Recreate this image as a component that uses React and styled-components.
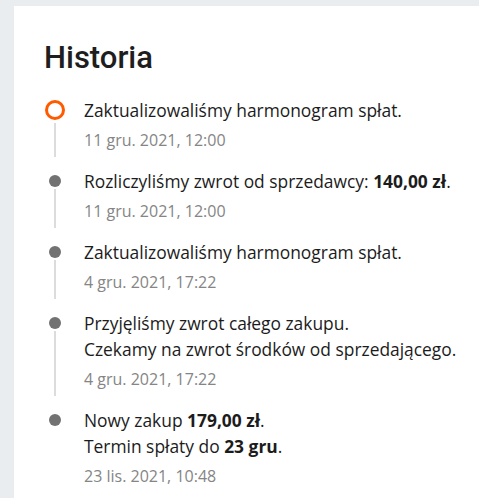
import React from "react";
import styled, { createGlobalStyle } from "styled-components";

const Global = createGlobalStyle`
  html, body { margin: 0; padding: 0; background: #ffffff; }
  body { font-family: "Open Sans", "Liberation Sans", sans-serif; }
  * { box-sizing: border-box; }
`;

const Page = styled.div`
  width: 479px;
  min-height: 498px;
  background: #e9edf0;
  padding: 6px 0 0 14px;
  display: flex;
`;

const Card = styled.section`
  flex: 1;
  min-width: 0;
  background: #ffffff;
  padding: 34px 0 0 30px;
`;

const Title = styled.h2`
  margin: 0 0 21px 0;
  font-family: Roboto, "Liberation Sans", sans-serif;
  font-weight: 500;
  font-size: 31px;
  line-height: 36px;
  color: #1e1e1e;
`;

const List = styled.ol`
  list-style: none;
  margin: 0;
  padding: 0;
`;

const Item = styled.li`
  display: grid;
  grid-template-columns: 22px 1fr;
  column-gap: 18px;
  padding-bottom: ${(p) => (p.$last ? 0 : 16)}px;
`;

const Rail = styled.div`
  display: flex;
  flex-direction: column;
  align-items: center;
  padding-top: ${(p) => (p.$active ? 3 : 7)}px;
`;

const Ring = styled.span`
  width: 20px;
  height: 20px;
  border-radius: 50%;
  border: 3px solid #ff5a00;
  flex: none;
`;

const Dot = styled.span`
  width: 12px;
  height: 12px;
  border-radius: 50%;
  background: #727272;
  flex: none;
`;

const Line = styled.span`
  flex: 1;
  width: 2px;
  background: #dcdcdc;
  margin-top: ${(p) => (p.$active ? 3 : 2)}px;
  margin-bottom: -5px;
`;

const Body = styled.div`
  min-width: 0;
`;

const Message = styled.p`
  margin: 0;
  font-size: 17.4px;
  line-height: 26px;
  color: #1c1c1c;
  white-space: nowrap;
  b { font-weight: 700; }
`;

const When = styled.time`
  display: block;
  margin-top: 5px;
  font-size: 16px;
  line-height: 24px;
  color: #858585;
`;

const events = [
  {
    active: true,
    lines: [<>Zaktualizowaliśmy harmonogram spłat.</>],
    date: "11 gru. 2021, 12:00",
  },
  {
    lines: [
      <>
        Rozliczyliśmy zwrot od sprzedawcy: <b>140,00 zł</b>.
      </>,
    ],
    date: "11 gru. 2021, 12:00",
  },
  {
    lines: [<>Zaktualizowaliśmy harmonogram spłat.</>],
    date: "4 gru. 2021, 17:22",
  },
  {
    lines: [
      <>Przyjęliśmy zwrot całego zakupu.</>,
      <>Czekamy na zwrot środków od sprzedającego.</>,
    ],
    date: "4 gru. 2021, 17:22",
  },
  {
    lines: [
      <>
        Nowy zakup <b>179,00 zł</b>.
      </>,
      <>
        Termin spłaty do <b>23 gru</b>.
      </>,
    ],
    date: "23 lis. 2021, 10:48",
  },
];

export default function App() {
  return (
    <>
      <Global />
      <Page>
        <Card>
          <Title>Historia</Title>
          <List>
            {events.map((e, i) => {
              const last = i === events.length - 1;
              return (
                <Item key={i} $last={last}>
                  <Rail $active={e.active}>
                    {e.active ? <Ring /> : <Dot />}
                    {!last && <Line $active={e.active} />}
                  </Rail>
                  <Body>
                    {e.lines.map((l, j) => (
                      <Message key={j}>{l}</Message>
                    ))}
                    <When>{e.date}</When>
                  </Body>
                </Item>
              );
            })}
          </List>
        </Card>
      </Page>
    </>
  );
}
